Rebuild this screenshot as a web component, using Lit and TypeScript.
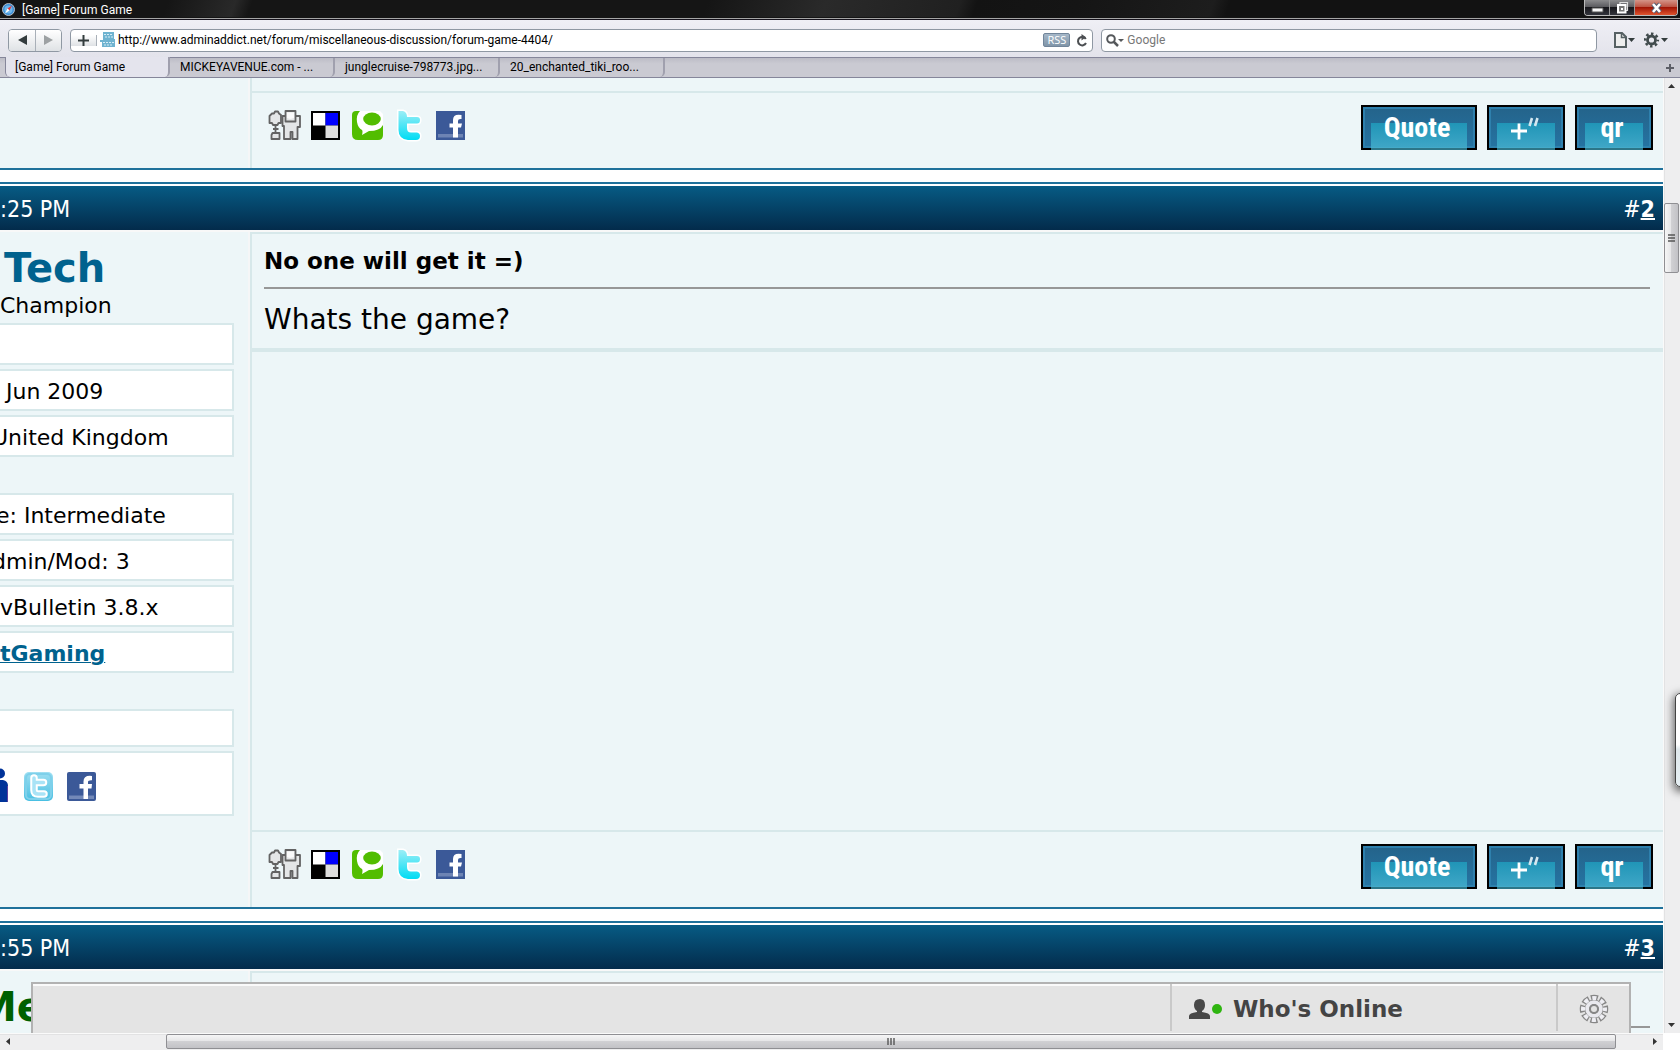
import { LitElement, html, css, svg, nothing } from "lit";
import { customElement, property } from "lit/decorators.js";

const digg = svg`<svg class="share" viewBox="0 0 34 30" aria-hidden="true">
  <g fill="#e4e6e7" stroke="#636363" stroke-width="1.8" stroke-linejoin="round">
    <path d="M4 3.500 6 3.500 7 1.500H10L11 3.500 13 5V13H10.500L9.500 15H5L4 13H1.500V6Z"/>
    <path d="M7.500 15V19H5M7.500 19H10.500M7.500 19V23" fill="none"/>
    <path d="M4.500 23H11.500V29H3.500V25Z"/>
    <path d="M14.500 6H32V17H29.500V29H24.500V22H22.500V29H16V16H14.500Z"/>
    <path d="M17.500 1H27.500V11.500H17.500Z"/>
  </g>
  <path d="M19 2.500H26V8L22 9 19 8Z" fill="#fafafa"/>
</svg>`;

const delicious = svg`<svg class="share" viewBox="0 0 34 30" aria-hidden="true">
  <path d="M2 1H31V30H2Z" fill="#000"/>
  <path d="M4 3H16.500V15.500H4Z" fill="#fff"/>
  <path d="M16.500 3H29V15.500H16.500Z" fill="#00f"/>
  <path d="M16.500 15.500H29V28H16.500Z" fill="#ddd"/>
</svg>`;

const technorati = svg`<svg class="share" viewBox="0 0 34 30" aria-hidden="true">
  <path d="M2 5Q2 1 6 1H25Q33 2 33 10V25Q33 30 28 30H8Q2 30 2 24Z" fill="#52bd00"/>
  <path d="M8 1H30L33 4V15Q30 21 19 21L12 25Q13 21 12 20 8 18 7 12Q6 5 10 1Z" fill="#fff"/>
  <ellipse cx="22" cy="9" rx="8.800" ry="6.500" fill="#52bd00"/>
</svg>`;

const twitter = svg`<svg class="share" viewBox="-2 0 34 30" aria-hidden="true">
  <defs><linearGradient id="tw" x1="0" y1="0" x2="0" y2="1">
    <stop offset="0" stop-color="#9beef6"/><stop offset="1" stop-color="#00dcf4"/></linearGradient></defs>
  <path d="M5.500 1H10Q14 2 14 7H24Q27 7 27 10Q27 13.500 24 13.500H14V18Q14 22.500 18 22.500H24Q27 23 27 26Q27 30 23 30H15Q5.500 29 5.500 20Z" fill="url(#tw)" stroke="#fff" stroke-width="3" paint-order="stroke"/>
</svg>`;

const facebook = svg`<svg class="share" viewBox="0 0 34 30" aria-hidden="true">
  <path d="M4 1H33V30H4Z" fill="#3b5998"/>
  <path d="M6 24H31V27.500H6Z" fill="#6d84b4"/>
  <path d="M29.500 5Q21 3.500 21 10V13.500H17.500V17.500H21V27.500H26V17.500H29L30 13.500H26V11Q26 8.500 29.500 9Z" fill="#fff"/>
</svg>`;

const myspace = svg`<svg class="contact lead" viewBox="0 0 32 34" aria-hidden="true">
  <circle cx="20" cy="5.500" r="5" fill="#039"/>
  <path d="M9 34V18Q9 12 15 12H23Q28 13 28 18V34Z" fill="#039"/>
  <path d="M27.500 18V34" stroke="#5b3fa0" stroke-width="1"/>
</svg>`;

const twitterBadge = svg`<svg class="contact" viewBox="0 0 32 34" aria-hidden="true">
  <defs><linearGradient id="tb" x1="0" y1="0" x2="0" y2="1">
    <stop offset="0" stop-color="#9fdff2"/><stop offset="1" stop-color="#48bfe2"/></linearGradient></defs>
  <rect x="1" y="4" width="29" height="29" rx="5" fill="url(#tb)"/>
  <rect x="3" y="6" width="25" height="25" rx="4" fill="none" stroke="#7ed0ea" stroke-width="2"/>
  <path d="M11 10V22Q11 26 15 26H21M11 14.500H20.500" fill="none" stroke="#fff" stroke-width="7.500" stroke-linecap="round" stroke-linejoin="round"/>
  <path d="M11 10V22Q11 26 15 26H21M11 14.500H20.500" fill="none" stroke="#a9e3f6" stroke-width="3.500" stroke-linecap="round"/>
</svg>`;

const facebookBadge = svg`<svg class="contact" viewBox="0 0 32 34" aria-hidden="true">
  <rect x="1" y="4" width="29" height="29" rx="2" fill="#3b5998"/>
  <path d="M3 27.500H28V31H3Z" fill="#7389b8"/>
  <path d="M26 8Q17.500 7 17.500 13.500V16H13.500V20.500H17.500V31H22V20.500H25.500L26 16H22V14Q22 12 26 12.300Z" fill="#fff"/>
</svg>`;

@customElement("forum-button")
class ForumButton extends LitElement {
  @property() label = "";
  @property() kind = "";
  static styles = css`
    :host { display: block; }
    button {
      display: grid;
      place-items: center;
      position: relative;
      box-sizing: border-box;
      width: 78px;
      height: 45px;
      padding: 0 4px 0 0;
      border: 2px solid #000;
      background: linear-gradient(#24638a, #2574a3);
      box-shadow: inset 0 0 0 2px #2e80ad;
      color: #fff;
      font: bold 28px/40px "Liberation Sans Narrow", "Roboto Condensed", "Open Sans Condensed", sans-serif;
      cursor: pointer;
    }
    .wide { width: 116px; }
    button::before {
      content: "";
      position: absolute;
      inset: 16px 8px -2px;
      background: linear-gradient(#2095b7, #3ea6c6 88%, #49afcb 93%, #2c7688 94%);
    }
    span { position: relative; }
    svg { position: relative; width: 30px; height: 26px; }
  `;
  render() {
    return html`<button type="button" class=${this.kind} aria-label=${this.label}>
      ${this.kind === "multi"
        ? svg`<svg viewBox="0 0 30 26" fill="none" stroke="#fff"><path d="M2 16H18M10 8.500V24.500" stroke-width="2.800"/><path d="M23 3 20.500 11M28.500 3 26 11" stroke-width="2.600" stroke="#d4e8f0"/></svg>`
        : html`<span>${this.label}</span>`}
    </button>`;
  }
}

type Row = { text?: string; cut?: string; link?: boolean; group?: boolean; kind?: string };

const techRows: Row[] = [
  {},
  { text: "Jun 2009", cut: "inset" },
  { text: "United Kingdom", cut: "cut-more" },
  { text: "e: Intermediate", cut: "cut", group: true },
  { text: "dmin/Mod: 3", cut: "cut-more" },
  { text: "vBulletin 3.8.x" },
  { text: "tGaming", link: true },
  { kind: "short", group: true },
  { kind: "contacts" },
];

@customElement("app-root")
class AppRoot extends LitElement {
  static styles = css`
    :host {
      display: flex;
      flex-direction: column;
      height: 100vh;
      overflow: hidden;
      background: #fff;
      color: #000;
      font-family: "DejaVu Sans", Verdana, sans-serif;
    }
    button, input { font: inherit; color: inherit; border: 0; padding: 0; margin: 0; background: none; }
    h2, h3, p { margin: 0; }
    svg { display: block; flex: none; }

    /* window chrome */
    .chrome { font: 12px/16px Roboto, "Open Sans", sans-serif; }
    .titlebar {
      display: flex;
      align-items: flex-start;
      gap: 2px;
      height: 18px;
      padding: 0 2px;
      border-bottom: 1px solid #a5a5a5;
      box-shadow: inset 0 -1px #151515;
      color: #fff;
      background: linear-gradient(110deg, #151515 10%, #292929 14%, #151515 15%, #151515 42%, #2a2a2a 49%, #202020 57%, #131313 58%, #151515 64%, #1d1d1d 72%, #121212 73%);
    }
    .titlebar span { flex: 1; padding: 2px 5px 0; }
    .titlebar svg { margin-top: 3px; }
    .winbtns {
      display: flex;
      height: 15px;
      border: 1px solid #bbb;
      border-top: 0;
      border-radius: 0 0 4px 4px;
      overflow: hidden;
    }
    .winbtns svg { margin: 0; }
    .winbtns button {
      display: grid;
      place-items: center;
      width: 25px;
      height: 15px;
      border-right: 1px solid #999;
      background: linear-gradient(#8b8b8d, #5c5c60 45%, #17171b 50%, #33343c);
    }
    .winbtns .close { width: 42px; border: 0; background: linear-gradient(#d49488, #bd5544 45%, #a11505 50%, #e0542e); }
    .toolbar {
      display: flex;
      align-items: center;
      gap: 8px;
      height: 38px;
      padding: 3px 8px 0;
      border-top: 1px solid #15121c;
      box-sizing: border-box;
      background: linear-gradient(#efeff5, #e3e3eb);
    }
    .group {
      display: flex;
      box-sizing: border-box;
      height: 23px;
      border: 1px solid #8f98a3;
      border-radius: 4px;
      background: #fff;
      overflow: hidden;
    }
    .group button.step {
      display: grid;
      place-items: center;
      width: 26px;
      background: linear-gradient(#fff, #dfe2e5);
    }
    .step.plus { border-right: 1px solid #a9b0b8; }
    .step + .step { border-left: 1px solid #a9b0b8; }
    .address { flex: 1020; align-items: center; }
    .address input, .search input { flex: 1; min-width: 0; height: 20px; outline: 0; }
    .address input { padding-left: 3px; }
    .address > svg { margin-left: 3px; }
    .rss {
      height: 14px;
      border: 1px solid #71859a;
      border-radius: 2px;
      background: linear-gradient(#a5b7c8, #8095a8);
      color: #fff;
      font: 11px/12px "Open Sans", sans-serif;
    }
    .address .rss { box-sizing: border-box; width: 27px; margin-right: 2px; border: 1px solid #71859a; background: linear-gradient(#a5b7c8, #8095a8); font-size: 11px; line-height: 12px; color: #fff; }
    .reload { display: grid; place-items: center; width: 20px; }
    .search { flex: 489; align-items: center; padding-left: 4px; }
    .search input { padding-left: 2px; }
    .search input::placeholder { color: #777; opacity: 1; }
    .menus { display: flex; gap: 9px; padding: 0 4px 0 9px; }
    .tabs {
      display: flex;
      box-sizing: border-box;
      height: 21px;
      padding-left: 5px;
      border: solid #85869a;
      border-width: 1px 0;
      background: linear-gradient(#bcbcc6, #cacad2 30%);
    }
    .tab {
      box-sizing: border-box;
      width: 165px;
      padding: 0 10px;
      border-right: 2px solid #a0a0ae;
      border-radius: 0 0 5px 5px;
      text-align: left;
      line-height: 19px;
      white-space: nowrap;
    }
    .tab.active { margin-top: -1px; padding: 1px 10px 0 9px; background: #e4e4ed; border-left: 1px solid #85869a; }
    .newtab { display: grid; place-items: center; width: 20px; margin-left: auto; }

    /* scrolled page */
    .view {
      flex: 1;
      min-height: 0;
      display: grid;
      grid-template: minmax(0, 1fr) 17px / minmax(0, 1fr) 17px;
      position: relative;
    }
    .page { position: relative; overflow: hidden; white-space: nowrap; }
    .post {
      margin-bottom: 12px;
      padding-top: 2px;
      border: solid #1f719b;
      border-width: 2px 0;
    }
    .post.first { border-top: 0; padding: 0; }
    .bar {
      display: flex;
      justify-content: space-between;
      padding: 2px 8px 0 0;
      border-bottom: 2px solid #f8f8f8;
      background: linear-gradient(#075b84, #032b4b);
      color: #fff;
      font: 23px/42px "DejaVu Sans Condensed", Tahoma, sans-serif;
    }
    .bar a { color: #fff; font-weight: bold; text-decoration-thickness: 2px; }
    .body { display: grid; grid-template-columns: 250px minmax(0, 1fr); background: #edf6f8; }
    .side {
      padding: 14px 14px 91px 0;
      border-right: 2px solid #f5f6f7;
      font-size: 22px;
      line-height: 31px;
    }
    .first .side { padding: 0; }
    .name { padding-left: 4px; color: #00628e; font-size: 40px; line-height: 44px; }
    .name.staff { margin-left: -27px; color: #006000; }
    .rows { display: flex; flex-direction: column; gap: 4px; margin-top: 2px; }
    .row {
      box-sizing: border-box;
      height: 42px;
      padding-top: 3px;
      border: solid #d7e8ea;
      border-width: 2px 2px 2px 0;
      background: #fff;
      line-height: 36px;
    }
    .row a { color: #00628e; font-weight: bold; text-decoration-thickness: 1px; }
    .grouped { margin-top: 32px; }
    .short { height: 38px; }
    .contacts { display: flex; align-items: center; height: 65px; gap: 11px; }
    .inset { text-indent: 6px; }
    .cut { text-indent: -4px; }
    .cut-more { text-indent: -8px; }
    .contact { width: 32px; height: 34px; }
    .lead { margin-left: -20px; }
    .main { display: flex; flex-direction: column; border-left: 2px solid #d7e8ea; }
    .message { padding: 13px 13px 11px 12px; border: solid #d7e8ea; border-width: 2px 0 4px; }
    .message h3 { font-size: 23px; line-height: 29px; }
    .rule { margin: 11px 0 14px; border: 0; border-top: 2px solid #979797; }
    .message p { font-size: 28px; line-height: 34px; }
    .actions {
      display: flex;
      justify-content: space-between;
      margin-top: auto;
      padding: 12px 10px 18px 16px;
      border-top: 2px solid #d7e8ea;
    }
    .first .actions { margin-top: 13px; }
    .shares { display: flex; gap: 7px; padding-top: 5px; }
    .shares a, .contacts a { display: block; }
    .share { width: 34px; height: 30px; overflow: visible; }
    .buttons { display: flex; gap: 10px; }

    /* community bar that floats over the page */
    .dock {
      position: absolute;
      inset: auto 32px 0 31px;
      display: flex;
      justify-content: flex-end;
      height: 49px;
      border: solid #b2b2b2;
      border-width: 2px 2px 0;
      background: #e4e4e4;
      box-shadow: inset 0 2px #fafafa;
    }
    .dock button {
      display: flex;
      align-items: center;
      height: 47px;
      padding-top: 2px;
      box-sizing: border-box;
      border-left: 2px solid #c9c9c9;
      color: #444;
      font-size: 23px;
      font-weight: bold;
    }
    .dock .online { width: 386px; gap: 9px; padding-left: 16px; }
    .dock .settings { width: 73px; justify-content: center; }

    /* scroll bars */
    .vscroll, .hscroll { display: flex; align-items: center; background: #eeeeef; }
    .vscroll { flex-direction: column; box-shadow: inset 1px 0 #fafafa, inset 2px 0 #e2e2e3; }
    .hscroll { box-shadow: inset 0 1px #fafafa, inset 0 2px #e2e2e3; }
    .arrow { display: grid; place-items: center; width: 17px; height: 17px; }
    .thumb {
      display: grid;
      place-items: center;
      box-sizing: border-box;
      border: 1px solid #8f8f93;
      border-radius: 2px;
    }
    .vscroll .thumb { width: 15px; height: 70px; margin: 108px 0 auto; background: linear-gradient(90deg, #f6f6f6, #e6e6e8 45%, #d0d0d3 50%, #c2c2c6); }
    .hscroll .thumb { height: 15px; flex: 1; margin: 0 30px 0 149px; background: linear-gradient(#f6f6f6, #e6e6e8 45%, #d0d0d3 50%, #c2c2c6); }
    .drawer {
      position: absolute;
      top: 615px;
      right: -9px;
      width: 12px;
      height: 92px;
      border: 1px solid #444;
      border-radius: 5px;
      background: linear-gradient(#fff 55%, #dfe8ec 60%, #e6eff3);
      box-shadow: 0 3px 8px 2px rgba(0, 0, 0, 0.55);
    }
  `;

  private arrow(d: string) {
    return html`<span class="arrow"><svg width="9" height="9" viewBox="0 0 9 9"><path d=${d} fill="#333"/></svg></span>`;
  }

  private row(r: Row) {
    return html`<div class="row ${r.kind ?? ""} ${r.cut ?? ""} ${r.group ? "grouped" : ""}">
      ${r.kind === "contacts"
        ? html`${myspace}<a href="#twitter" aria-label="Twitter">${twitterBadge}</a><a href="#facebook" aria-label="Facebook">${facebookBadge}</a>`
        : r.link ? html`<a href="#site">${r.text}</a>` : r.text ?? nothing}
    </div>`;
  }

  private actions() {
    return html`<div class="actions">
      <div class="shares">
        <a href="#digg" aria-label="Digg">${digg}</a>
        <a href="#delicious" aria-label="Delicious">${delicious}</a>
        <a href="#technorati" aria-label="Technorati">${technorati}</a>
        <a href="#twitter" aria-label="Twitter">${twitter}</a>
        <a href="#facebook" aria-label="Facebook">${facebook}</a>
      </div>
      <div class="buttons">
        <forum-button kind="wide" label="Quote"></forum-button>
        <forum-button kind="multi" label="Multi-quote"></forum-button>
        <forum-button kind="quick" label="qr"></forum-button>
      </div>
    </div>`;
  }

  private chrome() {
    const down = svg`<path d="M0 0H7L3.500 4Z" fill="#333c3d"/>`;
    return html`<header class="chrome">
      <div class="titlebar">
        <svg width="13" height="13" viewBox="0 0 13 13"><circle cx="6.500" cy="6.500" r="6" fill="#3c8fd6" stroke="#b5bcc4"/><circle cx="6.500" cy="6.500" r="4" fill="#6fb6ea"/><path d="M10 2.500 7.500 7.500 5.500 5.500Z" fill="#e33"/><path d="M3 10.500 5.500 5.500 7.500 7.500Z" fill="#fff"/></svg>
        <span>[Game] Forum Game</span>
        <div class="winbtns">
          <button type="button" aria-label="Minimize"><svg width="13" height="13" viewBox="0 0 13 13"><path d="M1 7H12V11H1Z" fill="#f5f5f5" stroke="#555"/></svg></button>
          <button type="button" aria-label="Restore"><svg width="13" height="13" viewBox="0 0 13 13"><path d="M4 1.500H11.500V9.500H4Z" fill="none" stroke="#ddd" stroke-width="1.200"/><path d="M2 4H9.500V11.500H2Z" fill="#777" stroke="#fff" stroke-width="2"/><path d="M5 7H7V9H5Z" fill="#fff"/></svg></button>
          <button type="button" class="close" aria-label="Close"><svg width="13" height="13" viewBox="0 0 13 13"><path d="M3 3 10 11M10 3 3 11" stroke="#555c70" stroke-width="4.500"/><path d="M3 3 10 11M10 3 3 11" stroke="#fff" stroke-width="2.600"/></svg></button>
        </div>
      </div>
      <div class="toolbar">
        <div class="group">
          <button type="button" class="step" aria-label="Back"><svg width="9" height="10" viewBox="0 0 9 10"><path d="M9 0V10L0 5Z" fill="#333c3d"/></svg></button>
          <button type="button" class="step" aria-label="Forward"><svg width="9" height="10" viewBox="0 0 9 10"><path d="M0 0V10L9 5Z" fill="#9da1a3"/></svg></button>
        </div>
        <div class="group address">
          <button type="button" class="step plus" aria-label="Add bookmark"><svg width="11" height="11" viewBox="0 0 11 11"><path d="M5.500 0V11M0 5.500H11" stroke="#333c3d" stroke-width="2"/></svg></button>
          <svg width="15" height="16" viewBox="0 0 15 16"><path d="M3 0H14V7H15V15H2V10H0V8H3Z" fill="#6fb3d0"/><path d="M4 2.500H13M5 5H13M3 10.500H14M4 13H13" stroke="#d6edf6" stroke-dasharray="2 1"/></svg>
          <input aria-label="Address" value="http://www.adminaddict.net/forum/miscellaneous-discussion/forum-game-4404/">
          <button type="button" class="rss">RSS</button>
          <button type="button" class="reload" aria-label="Reload"><svg width="12" height="13" viewBox="0 0 12 13"><path d="M9.800 5A4.200 4.200 0 1 0 10 9" fill="none" stroke="#4c4f52" stroke-width="2"/><path d="M5.500 0 10 3.200 5.500 6.400Z" fill="#4c4f52"/></svg></button>
        </div>
        <div class="group search">
          <svg width="19" height="13" viewBox="0 0 19 13"><circle cx="5" cy="5" r="3.800" fill="none" stroke="#55585b" stroke-width="2"/><path d="M7.500 7.500 12 12" stroke="#55585b" stroke-width="2.500"/><path d="M12 5H18L15 8Z" fill="#55585b"/></svg>
          <input aria-label="Search" placeholder="Google">
        </div>
        <div class="menus">
          <button type="button" aria-label="Page menu"><svg width="21" height="16" viewBox="0 0 21 16"><path d="M1 1H8L12 5V15H1Z" fill="#eee" stroke="#566063" stroke-width="2"/><path d="M7.500 1V5.500H12" fill="none" stroke="#566063" stroke-width="1.500"/><g transform="translate(14 6)">${down}</g></svg></button>
          <button type="button" aria-label="Settings menu"><svg width="24" height="16" viewBox="0 0 24 16"><circle cx="7.500" cy="8" r="6.300" fill="none" stroke="#414b4d" stroke-width="2.600" stroke-dasharray="2.470 2.470" stroke-dashoffset="1.235"/><circle cx="7.500" cy="8" r="4" fill="none" stroke="#414b4d" stroke-width="2.800"/><g transform="translate(17 6)">${down}</g></svg></button>
        </div>
      </div>
      <nav class="tabs">
        <button type="button" class="tab active">[Game] Forum Game</button>
        <button type="button" class="tab">MICKEYAVENUE.com - ...</button>
        <button type="button" class="tab">junglecruise-798773.jpg...</button>
        <button type="button" class="tab">20_enchanted_tiki_roo...</button>
        <button type="button" class="newtab" aria-label="New tab"><svg width="8" height="8" viewBox="0 0 8 8"><path d="M4 0V8M0 4H8" stroke="#5c5e66" stroke-width="2"/></svg></button>
      </nav>
    </header>`;
  }

  render() {
    return html`${this.chrome()}
      <div class="view">
        <main class="page">
          <article class="post first">
            <div class="body">
              <div class="side"></div>
              <div class="main">${this.actions()}</div>
            </div>
          </article>
          <article class="post">
            <div class="bar"><span>:25 PM</span><span>#<a href="#post2">2</a></span></div>
            <div class="body">
              <div class="side">
                <h2 class="name">Tech</h2>
                <div>Champion</div>
                <div class="rows">${techRows.map((r) => this.row(r))}</div>
              </div>
              <div class="main">
                <div class="message"><h3>No one will get it =)</h3><hr class="rule"><p>Whats the game?</p></div>
                ${this.actions()}
              </div>
            </div>
          </article>
          <article class="post">
            <div class="bar"><span>:55 PM</span><span>#<a href="#post3">3</a></span></div>
            <div class="body">
              <div class="side"><h2 class="name staff">Me</h2></div>
              <div class="main"><div class="message"><h3>&nbsp;</h3><hr class="rule"></div></div>
            </div>
          </article>
          <div class="dock">
            <button type="button" class="online">
              <svg width="36" height="22" viewBox="0 0 36 22"><path d="M12 1Q17 1 17 7Q17 11 14 13V14Q22 15 22 18V21H1V18Q1 15 9 14V13Q6 11 6 7Q6 1 12 1Z" fill="#484848"/><circle cx="29" cy="11" r="5" fill="#2fb510"/></svg>
              Who's Online
            </button>
            <button type="button" class="settings" aria-label="Settings">
              <svg width="30" height="30" viewBox="0 0 30 30">
                <circle cx="15" cy="15" r="11" fill="none" stroke="#868686" stroke-width="6.500" stroke-dasharray="6.640 2" stroke-dashoffset="3.320"/>
                <circle cx="15" cy="15" r="9.500" fill="#868686"/>
                <circle cx="15" cy="15" r="11" fill="none" stroke="#eeeef3" stroke-width="4" stroke-dasharray="4.140 4.500" stroke-dashoffset="2.070"/>
                <circle cx="15" cy="15" r="6.800" fill="none" stroke="#e9e9ee" stroke-width="4"/>
                <circle cx="15" cy="15" r="4" fill="#e4e4e4" stroke="#868686" stroke-width="2"/>
              </svg>
            </button>
          </div>
        </main>
        <div class="vscroll">
          ${this.arrow("M1 6H8L4.500 2Z")}
          <div class="thumb"><svg width="7" height="8" viewBox="0 0 7 8"><path d="M0 1H7M0 4H7M0 7H7" stroke="#555" stroke-width="1.400"/></svg></div>
          ${this.arrow("M1 3H8L4.500 7Z")}
        </div>
        <div class="hscroll">
          ${this.arrow("M6 1V8L2 4.500Z")}
          <div class="thumb"><svg width="8" height="7" viewBox="0 0 8 7"><path d="M1 0V7M4 0V7M7 0V7" stroke="#555" stroke-width="1.400"/></svg></div>
          ${this.arrow("M3 1V8L7 4.500Z")}
        </div>
        <div class="drawer"></div>
      </div>`;
  }
}
